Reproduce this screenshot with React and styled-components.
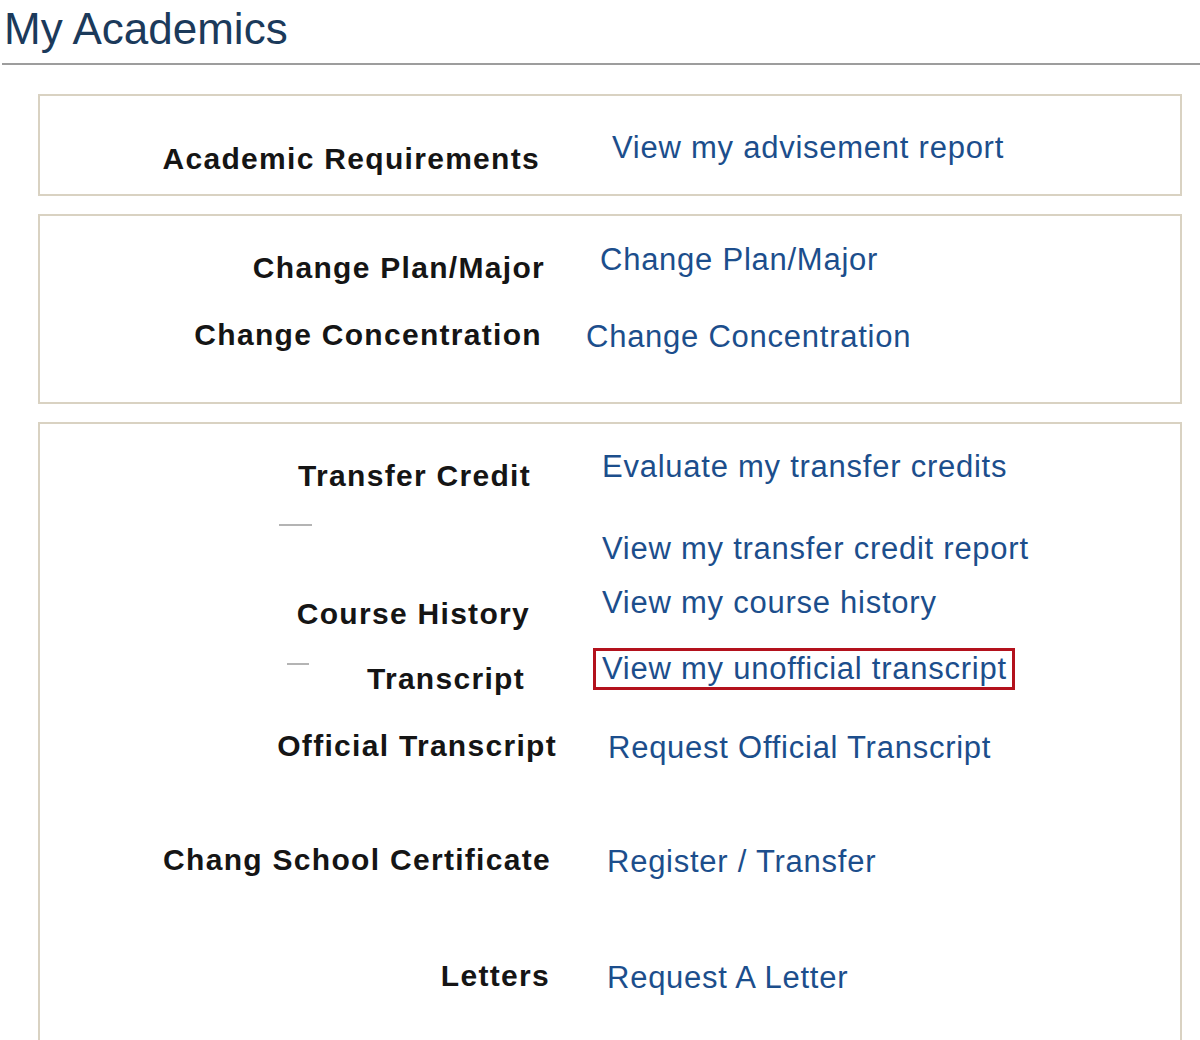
import React from 'react'
import styled, { createGlobalStyle } from 'styled-components'

const GlobalStyle = createGlobalStyle`
  html, body {
    margin: 0;
    padding: 0;
    background: #fff;
    overflow: hidden;
  }
  body {
    font-family: "Liberation Sans", Arial, sans-serif;
  }
`

const Page = styled.div`
  width: 1200px;
  height: 1040px;
  overflow: hidden;
`

const Header = styled.div`
  padding: 5px 0 0 2px;
  border-bottom: 2px solid #9d9d9d;
  margin-left: 2px;
  height: 58px;
`

const Title = styled.h1`
  margin: 0;
  font-family: "Liberation Sans", Arial, sans-serif;
  font-weight: normal;
  font-size: 44px;
  line-height: 48px;
  color: #1b3a5b;
`

const Sections = styled.div`
  display: flex;
  flex-direction: column;
  gap: 18px;
  padding: 29px 18px 0 38px;
`

const Panel = styled.div`
  border: 2px solid #d9d2c2;
  height: ${p => p.$height}px;
  box-sizing: border-box;
`

const Row = styled.div`
  display: grid;
  grid-template-columns: 505px 1fr;
  height: ${p => p.$height}px;
  align-items: start;
`

const Label = styled.div`
  justify-self: end;
  margin-top: ${p => p.$top}px;
  margin-right: ${p => p.$right || 0}px;
  font-weight: bold;
  font-size: 30px;
  line-height: 36px;
  letter-spacing: 1.3px;
  color: #151515;
  white-space: nowrap;
`

const LabelGroup = styled.div`
  justify-self: end;
  display: flex;
  align-items: flex-start;
  gap: ${p => p.$gap}px;
`

const Dash = styled.div`
  justify-self: end;
  width: ${p => p.$width}px;
  height: 2px;
  background: #b4b4b4;
  margin-top: ${p => p.$top}px;
  margin-right: ${p => p.$right || 0}px;
`

const Link = styled.a`
  justify-self: start;
  margin-top: ${p => p.$top}px;
  margin-left: ${p => p.$left}px;
  font-size: 31px;
  line-height: 36px;
  letter-spacing: 0.75px;
  color: #1c4e8c;
  text-decoration: none;
  white-space: nowrap;
  cursor: pointer;
`

const Highlight = styled.div`
  justify-self: start;
  margin-top: ${p => p.$top}px;
  margin-left: ${p => p.$left}px;
  border: 3px solid #b3121d;
  padding: 0 5px 0 6px;
  height: 36px;
  display: flex;
  align-items: center;
`

export default function App() {
  return (
    <Page>
      <GlobalStyle />
      <Header>
        <Title>My Academics</Title>
      </Header>
      <Sections>
        <Panel $height={102}>
          <Row $height={98}>
            <Label $top={45} $right={5}>Academic Requirements</Label>
            <Link $top={34} $left={67}>View my advisement report</Link>
          </Row>
        </Panel>

        <Panel $height={190}>
          <Row $height={67}>
            <Label $top={34} $right={0}>Change Plan/Major</Label>
            <Link $top={26} $left={55}>Change Plan/Major</Link>
          </Row>
          <Row $height={119}>
            <Label $top={34} $right={3}>Change Concentration</Label>
            <Link $top={36} $left={41}>Change Concentration</Link>
          </Row>
        </Panel>

        <Panel $height={700}>
          <Row $height={58}>
            <Label $top={34} $right={14}>Transfer Credit</Label>
            <Link $top={25} $left={57}>Evaluate my transfer credits</Link>
          </Row>
          <Row $height={100}>
            <Dash $width={33} $top={42} $right={233} />
            <Link $top={49} $left={57}>View my transfer credit report</Link>
          </Row>
          <Row $height={50}>
            <Label $top={14} $right={15}>Course History</Label>
            <Link $top={3} $left={57}>View my course history</Link>
          </Row>
          <Row $height={80}>
            <LabelGroup $gap={58}>
              <Dash $width={22} $top={31} />
              <Label $top={29} $right={20}>Transcript</Label>
            </LabelGroup>
            <Highlight $top={16} $left={48}>
              <Link $top={0} $left={0}>View my unofficial transcript</Link>
            </Highlight>
          </Row>
          <Row $height={100}>
            <Label $top={16} $right={-12}>Official Transcript</Label>
            <Link $top={18} $left={63}>Request Official Transcript</Link>
          </Row>
          <Row $height={116}>
            <Label $top={30} $right={-6}>Chang School Certificate</Label>
            <Link $top={32} $left={62}>Register / Transfer</Link>
          </Row>
          <Row $height={150}>
            <Label $top={30} $right={-5}>Letters</Label>
            <Link $top={32} $left={62}>Request A Letter</Link>
          </Row>
        </Panel>
      </Sections>
    </Page>
  )
}
